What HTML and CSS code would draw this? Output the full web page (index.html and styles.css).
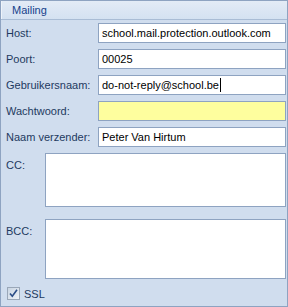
FILE: index.html
```html
<!DOCTYPE html>
<html>
<head>
<meta charset="utf-8">
<link rel="stylesheet" href="styles.css">
</head>
<body>
<div class="panel">
  <div class="title">Mailing</div>
  <div class="content">
    <div class="row">
      <label class="lbl">Host:</label>
      <div class="field">school.mail.protection.outlook.com</div>
    </div>
    <div class="row">
      <label class="lbl">Poort:</label>
      <div class="field">00025</div>
    </div>
    <div class="row">
      <label class="lbl">Gebruikersnaam:</label>
      <div class="field">do-not-reply@school.be<span class="caret"></span></div>
    </div>
    <div class="row">
      <label class="lbl">Wachtwoord:</label>
      <div class="field yellow"></div>
    </div>
    <div class="row">
      <label class="lbl">Naam verzender:</label>
      <div class="field">Peter Van Hirtum</div>
    </div>
    <div class="area-row cc">
      <label class="lbl-short">CC:</label>
      <div class="area"></div>
    </div>
    <div class="area-row bcc">
      <label class="lbl-short">BCC:</label>
      <div class="area"></div>
    </div>
    <div class="check-row">
      <span class="check">
        <svg width="11" height="11" viewBox="0 0 11 11"><path d="M2 5.5 L4.3 8.3 L9 1.8" fill="none" stroke="#2b4d86" stroke-width="1.6"/></svg>
      </span>
      <span class="check-lbl">SSL</span>
    </div>
  </div>
</div>
</body>
</html>
```

FILE: styles.css
```css
html, body {
  margin: 0;
  padding: 0;
  background: #d0ddee;
}
body {
  font-family: "Liberation Sans", Arial, sans-serif;
  font-size: 11px;
}
.panel {
  width: 288px;
  height: 307px;
  box-sizing: border-box;
  border: 1px solid #8ea3c1;
  background: #d0ddee;
  display: flex;
  flex-direction: column;
}
.title {
  height: 18px;
  border-bottom: 1px solid #a9bcd5;
  background: linear-gradient(#e3ebf6, #d4e1f1);
  color: #15428b;
  padding-left: 11px;
  line-height: 18px;
  box-shadow: inset 1px 0 0 #eef3fa;
}
.content {
  padding: 3px 1px 0 5px;
  display: flex;
  flex-direction: column;
}
.row {
  display: flex;
  align-items: center;
  height: 20px;
  margin-bottom: 6px;
}
.lbl {
  width: 92px;
  color: #1e3a5f;
  padding-bottom: 1px;
}
.field {
  flex: 1;
  height: 20px;
  box-sizing: border-box;
  border: 1px solid #8ea3c1;
  background: #fff;
  color: #000;
  padding-left: 3px;
  line-height: 18px;
  white-space: nowrap;
  overflow: hidden;
  display: flex;
  align-items: center;
}
.yellow {
  background: #fefe9e;
}
.caret {
  display: inline-block;
  width: 1px;
  height: 14px;
  background: #000;
  margin-left: 1px;
}
.area-row {
  display: flex;
}
.cc {
  height: 54px;
}
.bcc {
  height: 60px;
  margin-top: 12px;
}
.lbl-short {
  width: 39px;
  color: #1e3a5f;
  padding-top: 6px;
}
.area {
  flex: 1;
  box-sizing: border-box;
  border: 1px solid #8ea3c1;
  background: #fff;
}
.check-row {
  display: flex;
  align-items: center;
  margin-top: 8px;
  padding-left: 1px;
  height: 13px;
}
.check {
  width: 13px;
  height: 13px;
  box-sizing: border-box;
  border: 1px solid #9aa7b8;
  background: linear-gradient(135deg, #c9d5e3, #eef2f7);
  display: flex;
  align-items: center;
  justify-content: center;
}
.check-lbl {
  margin-left: 4px;
  color: #1e3a5f;
}
```
